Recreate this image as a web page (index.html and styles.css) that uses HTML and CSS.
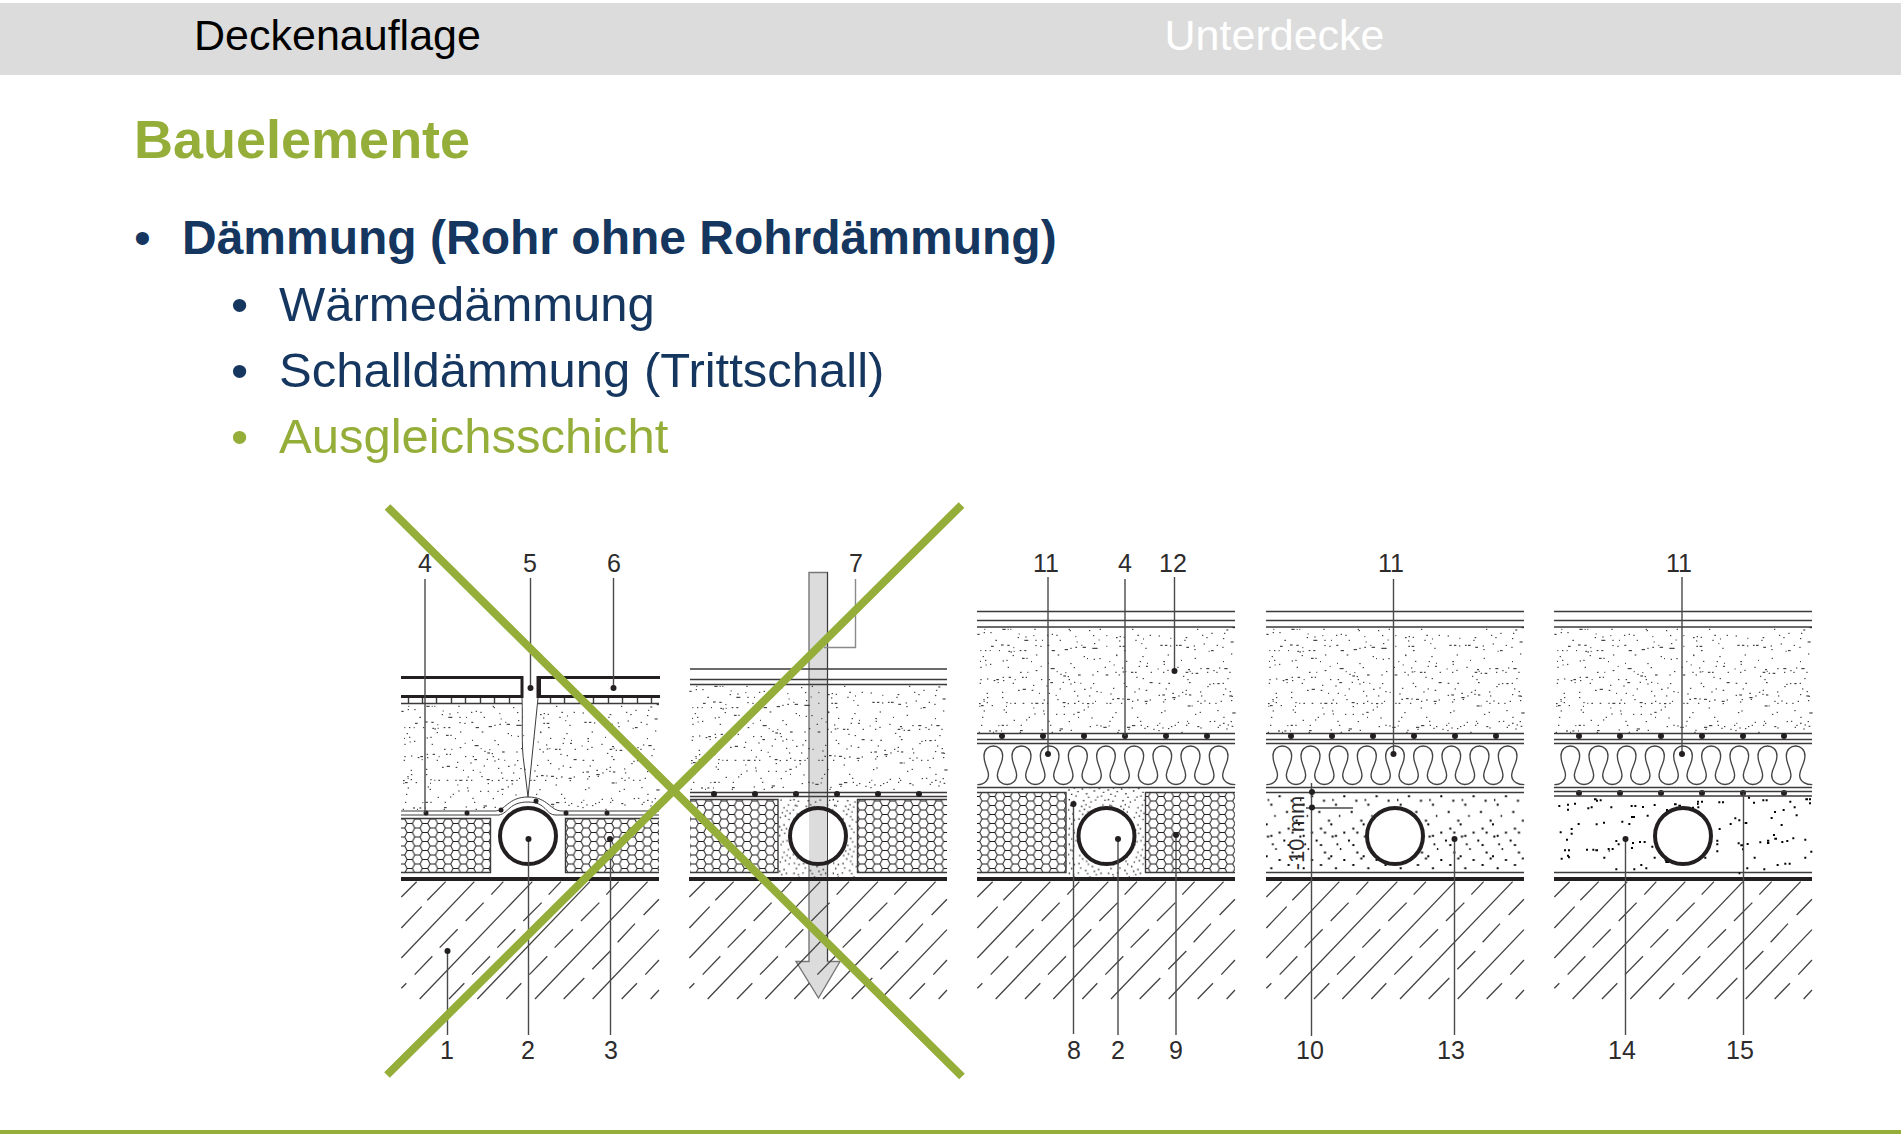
FILE: index.html
```html
<!DOCTYPE html>
<html lang="de">
<head>
<meta charset="utf-8">
<meta name="viewport" content="width=device-width, initial-scale=1">
<title>Bauelemente – Deckenauflage</title>
<link rel="stylesheet" href="styles.css">
</head>
<body>
<header class="tabs">
  <span class="tab tab-active">Deckenauflage</span>
  <span class="tab">Unterdecke</span>
</header>
<main class="content">
  <h1 class="title">Bauelemente</h1>
  <ul class="list">
    <li><strong>Dämmung (Rohr ohne Rohrdämmung)</strong>
      <ul class="sublist">
        <li>Wärmedämmung</li>
        <li>Schalldämmung (Trittschall)</li>
        <li class="highlight">Ausgleichsschicht</li>
      </ul>
    </li>
  </ul>
  <figure class="figure">
    <svg class="drawing" viewBox="384 500 1440 580" role="img" aria-label="Fünf Bodenaufbauten im Schnitt">
      <defs>
        <!-- detail shapes are drawn at three times their size -->
        <pattern id="honeycomb" width="46" height="27" patternUnits="userSpaceOnUse" patternTransform="translate(977 792) scale(.3333)">
          <path class="comb" d="M0 13.5H8L15 0H31L38 13.5H46M8 13.5L15 27H31L38 13.5"/>
        </pattern>
        <pattern id="gravel" width="97" height="260" patternUnits="userSpaceOnUse" patternTransform="translate(1250 787.3) scale(.3333)">
          <path class="pebbles" d="M61 52h6M86 27h6M25 40h6M53 38h4M11 74h6M73 86h4M40 100h6M47 111h6M16 124h6M86 136h6M28 136h6M61 146h6M3 160h6M51 148h6M76 185h4M16 173h6M28 196h6M47 207h6M86 218h6M40 214h6M61 243h6M16 233h6M66 171h5"/>
        </pattern>
        <pattern id="fine" width="118" height="134" patternUnits="userSpaceOnUse" patternTransform="translate(1067 787) scale(.3333)">
          <path class="grains" d="M4 9h4M20 3h4M31 14h4M44 6h4M67 2h4M80 12h4M95 5h4M108 16h4M12 22h4M25 27h4M57 20h4M63 31h4M90 30h4M102 27h4M5 38h4M18 43h4M48 41h4M70 45h4M84 39h4M112 40h4M9 55h4M14 57h4M42 58h4M55 53h4M66 60h4M93 62h4M106 54h4M3 69h4M36 72h4M50 67h4M61 75h4M88 77h4M102 71h4M111 79h4M15 81h4M45 82h4M57 89h4M82 91h4M97 87h4M6 95h4M20 99h4M34 96h4M62 98h4M74 105h4M108 97h4M12 111h4M39 109h4M54 117h4M80 119h4M93 114h4M5 125h4M18 129h4M32 124h4M60 126h4M86 129h4M100 125h4"/>
        </pattern>
        <path id="screed" class="specks" d="M43 313h7M62 308h4M64 298h3M118 298h10M134 298h3M142 298h3M82 308h4M97 331h5M84 349h8M66 362h4M52 362h3M80 362h3M59 380h4M114 345h8M133 346h7M136 364h5M142 366h5M152 364h3M108 362h3M151 353h3M164 323h4M167 312h3M187 321h4M184 331h12M214 298h4M211 317h3M217 331h4M217 347h4M170 362h5M184 362h6M232 349h4M252 316h4M266 313h4M280 316h4M237 331h3M290 331h4M253 346h6M266 362h10M305 359h10M322 355h4M317 298h4M320 302h4M337 320h3M337 352h5M341 336h3M355 346h3M359 352h10M378 302h4M410 298h4M390 317h4M393 341h4M407 330h3M430 317h3M388 355h16M392 388h4M409 386h4M430 349h3M459 323h5M470 320h4M468 333h4M482 322h4M469 349h5M479 349h8M459 375h4M460 377h3M483 362h5M507 298h4M523 316h5M517 331h4M540 327h3M535 341h3M547 355h4M560 316h4M587 318h4M592 346h7M606 346h7M621 348h4M622 325h3M639 346h5M648 346h8M668 323h5M664 331h4M670 352h8M692 348h4M694 359h4M702 298h4M717 316h4M730 323h4M745 310h4M722 342h4M737 364h3M744 362h8M761 346h4M780 326h4M783 310h4M790 300h6M809 293h7M803 336h9M778 352h4M804 372h4M66 391h4M51 394h3M81 403h4M52 412h4M68 405h3M119 393h4M130 391h4M134 412h4M149 377h4M177 385h8M190 385h4M219 375h4M204 395h3M171 427h5M218 422h5M233 409h3M193 427h3M255 400h3M263 416h12M284 375h5M281 425h3M292 433h4M322 401h4M307 428h3M332 413h4M314 440h4M345 435h8M362 380h4M372 386h3M388 435h4M402 425h4M425 412h4M428 435h8M439 395h3M457 427h4M467 435h4M452 405h3M477 414h4M479 426h5M489 394h4M487 425h3M504 427h7M516 427h5M530 395h4M527 409h4M549 409h6M538 380h4M552 400h3M563 427h4M584 417h3M601 395h5M602 403h4M600 427h4M614 375h4M613 421h4M643 412h4M654 391h3M668 427h8M680 424h3M686 430h4M698 430h8M675 419h6M695 385h4M712 416h4M730 416h9M732 427h4M751 422h4M760 427h4M768 414h4M784 416h10M799 427h4M780 395h3M52 449h4M50 460h4M72 447h4M92 452h5M100 449h8M119 442h4M120 452h4M137 442h7M104 458h3M155 449h3M177 442h5M188 442h4M149 460h4M210 466h4M165 481h5M179 478h10M206 481h5M234 449h4M257 449h4M262 458h8M250 468h4M301 438h8M299 457h4M290 477h4M257 490h4M228 490h3M317 449h4M322 462h4M333 457h4M352 460h3M333 484h4M342 498h4M363 478h5M382 474h4M390 461h4M400 485h4M413 487h3M378 498h4M450 475h4M442 492h4M482 460h4M489 470h4M462 506h8M448 508h5M478 507h4M492 508h9M520 442h4M539 446h4M527 477h4M514 486h4M560 458h9M548 481h5M587 460h5M616 460h5M608 477h4M587 496h4M598 495h8M628 490h5M628 503h10M646 498h4M632 508h4M660 439h4M673 449h4M678 458h5M657 487h4M668 481h4M678 495h7M667 493h4M711 486h4M714 498h4M733 470h4M739 463h4M750 461h4M763 461h7M779 460h4M793 446h4M786 477h4M800 485h4M799 498h8M780 494h4M806 499h4M71 490h4M117 487h4M61 509h4M72 503h4M62 514h3M48 521h5M54 527h8M49 529h3M86 527h4M71 518h4M117 503h4M130 518h4M142 520h3M129 529h3M154 520h5M179 520h5M205 520h4M217 520h9M237 520h5M252 520h4M242 510h4M283 509h4M278 496h3M299 518h9M314 521h4M333 520h5M302 530h4M345 514h4M358 520h4M372 521h7M388 520h4M396 514h3M430 520h4M440 520h5M474 520h4M507 514h4M522 510h5M545 514h9M560 510h4M548 521h4M600 516h4M605 509h4M674 528h9M686 528h3M703 514h4M712 520h4M724 513h4M738 520h4M757 520h4M773 514h4M804 512h4M62 543h4M57 562h4M122 540h4M128 547h4M152 571h4M116 586h7M106 587h3M130 586h4M54 586h4M47 607h4M78 603h6M90 607h3M97 603h6M114 603h3M197 562h4M189 570h4M214 552h4M211 534h3M173 586h4M171 602h8M170 607h4M240 543h4M242 552h4M279 553h4M256 574h4M261 586h4M236 600h4M266 607h4M290 597h10M289 602h5M302 553h4M331 553h4M343 547h7M317 575h4M323 601h4M362 540h4M374 531h4M345 562h3M385 564h4M380 590h4M400 586h4M412 588h4M421 592h10M439 574h4M447 562h4M457 548h4M437 588h3M466 601h4M463 607h4M492 592h10M496 598h4M507 587h10M522 562h4M531 574h4M506 534h4M533 586h4M544 595h4M552 590h4M571 598h4M594 548h4M604 543h4M582 586h4M589 580h3M598 594h4M586 602h4M615 596h4M624 590h4M635 586h4M644 577h4M669 586h4M675 580h4M655 607h4M672 574h3M696 553h4M703 590h6M712 594h4M710 547h4M740 575h4M753 574h4M764 592h4M769 586h4M780 580h5M794 585h4M806 589h5M808 549h10M781 562h4M763 542h4M803 575h4M790 597h4"/>
        <!-- solid and broken diagonals of the concrete slab -->
        <path id="hatch" class="hatch-line" d="M98 335L52 381M271 335L52 564M445 335L107 687M618 335L280 687M791 335L453 687M825 479L626 687M185 335L130 391M113 410L52 474M358 335L322 374M299 398L245 453M221 478L167 533M145 559L92 614M67 640L52 655M531 335L494 374M473 398L418 453M394 478L340 533M318 559L264 614M241 640L195 687M704 335L667 374M646 398L591 453M567 478L512 533M490 559L436 614M412 640L367 687M825 388L779 435M753 461L701 517M679 543L625 598M601 624L539 687M825 570L784 614M759 640L713 687M825 660L800 687"/>
        <path id="wave" class="wave-line" d="M52 764C75 764 88 748 85 730C83 715 72 700 72 678c0-40 56-40 56 0c0 22-15 37-16 57c0 38 58 38 58 0c-1-20-14-35-14-57c0-40 57-40 57 0c0 22-15 37-16 57c0 38 58 38 58 0c-1-20-14-35-14-57c0-40 56-40 56 0c0 22-15 37-16 57c0 38 58 38 58 0c-1-20-14-35-14-57c0-40 57-40 57 0c0 22-15 37-16 57c0 38 58 38 58 0c-1-20-14-35-14-57c0-40 56-40 56 0c0 22-15 37-16 57c0 38 58 38 58 0c-1-20-14-35-14-57c0-40 57-40 57 0c0 22-15 37-16 57c0 38 58 38 58 0c-1-20-14-35-14-57c0-40 56-40 56 0c0 22-15 37-16 57c0 38 58 38 58 0c-1-20-14-35-14-57c0-40 57-40 57 0c0 22-15 37-16 57c0 38 58 38 58 0c-1-20-14-35-14-57c0-40 56-40 56 0c0 22-15 37-16 57c0 22 22 29 38 29"/>
        <g id="slab">
          <use href="#hatch" transform="translate(960 770) scale(.3333)"/>
          <path class="slab-top" d="M977 879H1235"/>
        </g>
        <g id="mesh" class="ink">
          <circle cx="1002" cy="736" r="3"/><circle cx="1043" cy="736" r="3"/><circle cx="1084" cy="736" r="3"/><circle cx="1125" cy="736" r="3"/><circle cx="1166" cy="736" r="3"/><circle cx="1207" cy="736" r="3"/>
        </g>
        <g id="floating-floor">
          <path class="line" d="M977 611.5H1235M977 620.5H1235M977 627H1235M977 733.5H1235M977 739.5H1235M977 743.5H1235M977 787.5H1235"/>
          <use href="#screed" transform="translate(963 530) scale(.3333)"/>
          <use href="#mesh"/>
          <use href="#wave" transform="translate(960 530) scale(.3333)"/>
        </g>
      </defs>

      <!-- 1: cracked screed on filled insulation -->
      <g>
        <use href="#slab" x="-576"/>
        <use href="#screed" transform="translate(387 607) scale(.3333)"/>
        <path class="blank" d="M522 699H538L528 797Z"/>
        <path class="blank" d="M401 811H495Q502 811 507 805Q528 790 549 803Q556 811 565 811H659V875H401Z"/>
        <path class="tile" d="M401 677.5H522V696.5H401M660 677.5H538V696.5H660"/>
        <path class="tile" d="M539.5 677V697"/>
        <path class="line" d="M401 703.5H522M538 703.5H659M408.500 698V703M422.500 698V703M436.500 698V703M451.500 698V703M465.500 698V703M480.500 698V703M494.500 698V703M509.500 698V703M550.500 698V703M564.500 698V703M579.500 698V703M593.500 698V703M608.500 698V703M622.500 698V703M637.500 698V703M651.500 698V703"/>
        <path class="thin" d="M522 698C523 720 521 745 524 764L528 797M538 698L528 797"/>
        <path class="thin" d="M401 811H495C505 811 508 797 528 797S550 811 562 811H659M401 815H499C509 813 509 802 528 802S545 815 556 815H659"/>
        <g class="ink"><circle cx="426" cy="813" r="2.500"/><circle cx="467" cy="813" r="2.500"/><circle cx="501" cy="810" r="2.500"/><circle cx="536" cy="801" r="2.500"/><circle cx="566" cy="813" r="2.500"/><circle cx="607" cy="813" r="2.500"/></g>
        <path class="block" d="M401 818.500H490V872.500H401ZM565.500 818.500H659V872.500H565.500Z"/>
        <path class="line" d="M401 818.500H490.500V872.500H401M659 818.500H565.500V872.500H659"/>
        <circle class="pipe" cx="528" cy="836" r="28"/>
      </g>

      <!-- 2: pipe bedded in fill, sound bridge arrow -->
      <g>
        <path class="arrow" d="M809 572.500H827.500V961.500H840L818.500 998L796 961.500H809Z"/>
        <path class="thin" d="M827.500 572V961"/>
        <use href="#slab" x="-288"/>
        <use href="#screed" transform="translate(675 587) scale(.3333)"/>
        <path class="line" d="M690 669H947M690 679.500H947M690 684.500H947M690 792.500H947M690 796.500H947"/>
        <use href="#mesh" x="-288" y="58"/>
        <rect class="fill-fine" x="778" y="798" width="79" height="79"/>
        <path class="block" d="M690 799.500H778V872.500H690ZM857.500 799.500H947V872.500H857.500Z"/>
        <path class="line" d="M690 799.500H778V872.500H690M947 799.500H857.500V872.500H947"/>
        <circle class="blank" cx="818" cy="836" r="28"/>
        <path class="arrow-core" d="M809 809H827.500V863H809Z"/>
        <path class="thin" d="M827.500 809V863"/>
        <circle class="pipe-open" cx="818" cy="836" r="28"/>
        <path class="grey-line" d="M855.500 579V647.500H824"/>
      </g>

      <!-- 3: floating screed, pipe bedded between insulation boards -->
      <g>
        <use href="#slab"/>
        <use href="#floating-floor"/>
        <rect class="fill-fine" x="1067" y="788" width="78" height="89"/>
        <path class="block" d="M977 792.500H1066V872.500H977ZM1145.500 792.500H1235V872.500H1145.500Z"/>
        <path class="line" d="M977 792.500H1066V872.500H977M1235 792.500H1145.500V872.500H1235"/>
        <circle class="pipe" cx="1106.500" cy="836" r="28"/>
      </g>

      <!-- 4: floating screed on loose levelling fill -->
      <g>
        <use href="#slab" x="289"/>
        <use href="#floating-floor" x="289"/>
        <rect class="fill-gravel" x="1266" y="793" width="258" height="79"/>
        <path class="line" d="M1266 792.500H1524M1266 872.500H1524"/>
        <circle class="pipe" cx="1395" cy="836" r="28"/>
      </g>

      <!-- 5: floating screed on bound levelling layer -->
      <g>
        <use href="#slab" x="577"/>
        <use href="#floating-floor" x="577"/>
        <use href="#mesh" x="577" y="57"/>
        <path class="line" d="M1554 791.500H1812M1554 796H1812M1554 872.500H1812"/>
        <path class="pebbles" transform="translate(1540 770) scale(.3333)" d="M55 108h6M81 104h6M81 119h6M102 101h6M142 115h6M152 112h6M162 88h8M168 92h6M179 91h6M211 112h6M272 108h6M283 108h6M306 111h6M341 105h6M320 137h6M273 141h12M244 155h6M265 162h6M189 158h6M167 163h6M113 162h6M59 187h6M92 177h6M92 191h6M78 209h6M72 241h6M84 241h6M81 257h6M84 262h6M62 266h6M138 239h6M157 239h6M166 241h8M190 263h6M203 237h6M215 237h6M206 242h3M226 213h6M233 223h6M276 219h6M273 234h6M297 216h6M311 216h6M334 230h6M341 263h6M301 285h6M316 295h6M280 298h6M226 298h6M402 103h8M415 107h8M456 113h6M471 95h6M483 95h6M471 102h5M472 112h6M378 120h6M374 270h8M376 276h12M493 263h6M535 97h6M546 97h6M536 177h6M529 212h6M529 223h6M529 244h6M569 162h6M583 145h6M595 151h6M614 159h8M593 220h6M601 226h8M606 238h5M620 222h6M641 263h6M619 295h6M670 298h6M596 310h5M624 83h6M639 98h6M667 91h6M677 91h6M702 126h6M692 144h6M728 120h6M767 136h6M761 112h6M748 95h6M796 88h8M807 88h6M807 100h6M722 165h6M699 195h6M703 206h8M681 212h7M681 219h7M658 217h6M724 216h6M739 213h6M757 205h6M793 209h6M811 245h6M793 263h6M710 285h6M733 281h6M746 281h6"/>
        <circle class="pipe" cx="1683" cy="836" r="28"/>
      </g>

      <!-- reference lines and their end points -->
      <path class="leader" d="M425 579V813M530.500 578V688M613.500 578V688M447.500 951V1035M528.500 839V1035M610.500 839V1035M1048 577V754M1125 579V736M1174.500 577V671M1073.500 804V1034M1118 839V1035M1176 835V1035M1393.500 579V754M1311.500 783V1036M1306 808H1353M1454.500 839V1035M1682 577V754M1625.500 839V1035M1743.500 793V1035"/>
      <g class="ink">
        <circle cx="530.500" cy="688" r="3"/><circle cx="613.500" cy="688" r="3"/><circle cx="447.500" cy="951" r="3"/><circle cx="528.500" cy="839" r="3"/><circle cx="610" cy="839" r="3"/><circle cx="1048" cy="754" r="3"/><circle cx="1174.500" cy="671" r="3"/><circle cx="1073.500" cy="804" r="3"/><circle cx="1118" cy="839" r="3"/><circle cx="1176" cy="835" r="3"/><circle cx="1393.500" cy="754" r="3"/><circle cx="1312" cy="792" r="3"/><circle cx="1312" cy="807.500" r="3"/><circle cx="1454.500" cy="839" r="3"/><circle cx="1682" cy="754" r="3"/><circle cx="1625.500" cy="839" r="3"/>
      </g>
      <g class="labels">
        <text x="425" y="572">4</text><text x="530" y="572">5</text><text x="614" y="572">6</text><text x="856" y="572">7</text>
        <text x="1046" y="572">11</text><text x="1125" y="572">4</text><text x="1173" y="572">12</text><text x="1391" y="572">11</text><text x="1679" y="572">11</text>
        <text x="447" y="1059">1</text><text x="528" y="1059">2</text><text x="611" y="1059">3</text>
        <text x="1074" y="1059">8</text><text x="1118" y="1059">2</text><text x="1176" y="1059">9</text><text x="1310" y="1059">10</text><text x="1451" y="1059">13</text><text x="1622" y="1059">14</text><text x="1740" y="1059">15</text>
        <text class="dimension" transform="translate(1304 833) rotate(-90)">-10 mm</text>
      </g>
      <path class="cross" d="M387.500 507L962 1076.500M961.500 505L387 1075"/>
    </svg>
  </figure>
</main>
<footer class="rule"></footer>
</body>
</html>
```
FILE: styles.css
```css
* {
  box-sizing: border-box;
}

body {
  display: flex;
  flex-direction: column;
  min-height: 100vh;
  margin: 0;
  background: #fff;
  color: #14365f;
  font-family: "Liberation Sans", Arial, Helvetica, sans-serif;
}

.tabs {
  display: grid;
  grid-template-columns: 51% 1fr;
  margin-top: 3px;
  padding: 8px 0 16px 194px;
  background: #dcdcdc;
  font-size: 43px;
  line-height: 48px;
}

.tab {
  padding-left: 100px;
  color: #fff;
}

.tab-active {
  padding-left: 0;
  color: #000;
}

.content {
  padding: 33px 77px 0 134px;
}

.title {
  margin: 0 0 35px;
  color: #94ae39;
  font-size: 54px;
  line-height: 62px;
}

.list,
.sublist {
  margin: 0;
  list-style: none;
  line-height: 66px;
}

.list {
  padding: 0 0 0 48px;
  font-size: 48px;
}

.sublist {
  padding: 0 0 0 97px;
  font-size: 49px;
}

.list li::before {
  content: "•";
  display: inline-block;
  width: 48px;
  margin-left: -48px;
}

.highlight {
  color: #94ae39;
}

.figure {
  max-width: 1440px;
  margin: 31px 0 0 auto;
}

.drawing {
  display: block;
  width: 100%;
}

.rule {
  height: 4px;
  margin-top: auto;
  background: #94ae39;
}

.comb {
  fill: none;
  stroke: #231f20;
  stroke-width: 3;
}

.specks,
.grains,
.pebbles {
  fill: none;
  stroke: #231f20;
  stroke-width: 3;
}

.grains {
  stroke-width: 4;
}

.pebbles {
  stroke: #000;
  stroke-width: 6;
}

.hatch-line,
.wave-line {
  fill: none;
  stroke: #444;
  stroke-width: 4;
}

.slab-top {
  stroke: #231f20;
  stroke-width: 4;
}

.ink {
  fill: #231f20;
}

.line,
.thin,
.leader {
  fill: none;
  stroke: #3c3a3b;
  stroke-width: 1;
}

.leader {
  stroke: #4a4a4a;
  stroke-width: 1.4;
}

.line {
  stroke-width: 1.4;
}

.grey-line {
  fill: none;
  stroke: #8a8a8a;
  stroke-width: 1.4;
}

.tile {
  fill: none;
  stroke: #231f20;
  stroke-width: 3;
}

.blank {
  fill: #fff;
}

.block {
  fill: url(#honeycomb);
}

.fill-fine {
  fill: url(#fine);
}

.fill-gravel {
  fill: url(#gravel);
}

.pipe,
.pipe-open {
  fill: #fff;
  stroke: #231f20;
  stroke-width: 4;
}

.pipe-open {
  fill: none;
}

.arrow {
  fill: #dcdcdc;
  stroke: #777;
  stroke-width: 1.4;
}

.arrow-core {
  fill: #dcdcdc;
}

.labels {
  fill: #2d2b2c;
  font-size: 25px;
  text-anchor: middle;
}

.dimension {
  font-size: 22px;
}

.cross {
  stroke: #94ae39;
  stroke-width: 8;
}
```
